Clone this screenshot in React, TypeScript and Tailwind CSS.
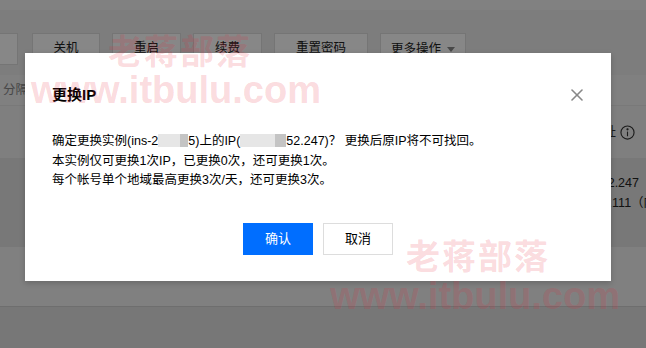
import React from "react";

const font = "font-['Liberation_Sans','Noto_Sans_CJK_SC',sans-serif]";

const toolbar = [
  { label: "关机", w: "w-[68px]" },
  { label: "重启", w: "w-[69px]" },
  { label: "续费", w: "w-[69px]" },
  { label: "重置密码", w: "w-[94px]" },
];

const Blur: React.FC<{ w: string; dark: string }> = ({ w, dark }) => (
  <span className={`inline-flex h-[13px] align-[-2px] ${w} blur-[0.6px]`}>
    <span className="flex-1 bg-[#e6e6e6]" />
    <span className={`${dark} bg-[#c4c4c4]`} />
  </span>
);

const Watermark: React.FC<{ left: string; top: string; top2: string; left2: string }> = ({ left, top, top2, left2 }) => (
  <>
    <span
      className={`pointer-events-none absolute ${left} ${top} whitespace-nowrap font-['Noto_Sans_CJK_SC',sans-serif] text-[34px] font-bold leading-none tracking-[2px] text-[rgba(230,40,60,0.18)]`}
    >
      老蒋部落
    </span>
    <span
      className={`pointer-events-none absolute ${left2} ${top2} whitespace-nowrap font-['Liberation_Sans',sans-serif] text-[38px] font-bold leading-none text-[rgba(230,40,60,0.18)]`}
    >
      www.itbulu.com
    </span>
  </>
);

export default function App() {
  return (
    <div className={`relative h-[348px] w-[646px] overflow-hidden ${font}`}>
      {/* page under the dialog */}
      <div className="flex h-full flex-col bg-[#ececec] text-[12.5px] text-[#333]">
        <div className="h-[10px] bg-[#f3f3f3]" />
        <div className="h-[23px]" />
        <div className="flex h-[32px] gap-[12px]">
          <div className="w-[18px] border border-l-0 border-[#dedede] bg-white" />
          <div className="flex gap-[12px] pl-[2px]">
            {toolbar.map((b) => (
              <div
                key={b.label}
                className={`flex items-center justify-center border border-[#dedede] bg-white pb-[1px] text-[#222] ${b.w}`}
              >
                {b.label}
              </div>
            ))}
            <div className="flex w-[86px] items-center justify-center gap-[6px] border border-[#dedede] bg-white text-[#222]">
              更多操作
              <span className="h-0 w-0 border-x-[4px] border-t-[5px] border-x-transparent border-t-[#888]" />
            </div>
          </div>
        </div>
        <div className="h-[10px]" />
        <div className="flex h-[30px] items-center bg-[#f1f1f1] pl-[3px] text-[#888]">分隔多个关键字</div>
        <div className="flex h-[53px] items-center justify-end gap-[4px] border-t border-[#e4e4e4] bg-[#f0f0f0] pr-[11px]">
          <span className="text-[#333]">主IP地址</span>
          <svg width="15" height="15" viewBox="0 0 16 16" fill="none" stroke="#333" strokeWidth="1.2">
            <circle cx="8" cy="8" r="7" />
            <line x1="8" y1="7" x2="8" y2="12" />
            <circle cx="8" cy="4.6" r="0.6" fill="#333" />
          </svg>
        </div>
        <div className="flex h-[89px] flex-col whitespace-nowrap bg-[#e2e2e2] pl-[553px] pt-[15px] leading-[20px] text-[#222]">
          <span>118.25.152.247</span>
          <span>10.104.72.111（内网）</span>
        </div>
        <div className="h-[60px] border-b border-[#d0d0d0] bg-[#f1f1f1]" />
        <div className="flex-1 bg-[#e1e1e1]" />
      </div>

      {/* mask */}
      <div className="absolute inset-0 bg-black/[0.47]" />

      {/* dialog */}
      <div className="absolute left-[25px] top-[53px] w-[586px] bg-white shadow-[0_2px_6px_rgba(0,0,0,0.2)]">
        <div className="flex items-center justify-between pl-[27px] pr-[28px] pt-[32px]">
          <h3 className="text-[15px] font-bold leading-[20px] text-black">更换IP</h3>
          <svg width="12" height="12" viewBox="0 0 12 12" stroke="#888" strokeWidth="1.6" strokeLinecap="round">
            <line x1="1" y1="1" x2="11" y2="11" />
            <line x1="11" y1="1" x2="1" y2="11" />
          </svg>
        </div>
        <div className="mt-[27px] pl-[27px] text-[12.5px] leading-[19.5px] text-black">
          <p className="whitespace-nowrap">
            确定更换实例(ins-2
            <Blur w="w-[30px]" dark="w-[8px]" />
            5)上的IP(
            <Blur w="w-[46px]" dark="w-[11px]" />
            52.247)？ 更换后原IP将不可找回。
          </p>
          <p>本实例仅可更换1次IP，已更换0次，还可更换1次。</p>
          <p>每个帐号单个地域最高更换3次/天，还可更换3次。</p>
        </div>
        <div className="mt-[32px] flex justify-center gap-[10px] pb-[26px] text-[13px]">
          <button className="h-[32px] w-[70px] bg-[#006eff] text-white">确认</button>
          <button className="h-[32px] w-[70px] border border-[#dddddd] bg-white text-black">取消</button>
        </div>
      </div>

      {/* watermarks */}
      <Watermark left="left-[108px]" top="top-[33px]" left2="left-[31px]" top2="top-[71px]" />
      <Watermark left="left-[406px]" top="top-[238px]" left2="left-[330px]" top2="top-[277px]" />
    </div>
  );
}
